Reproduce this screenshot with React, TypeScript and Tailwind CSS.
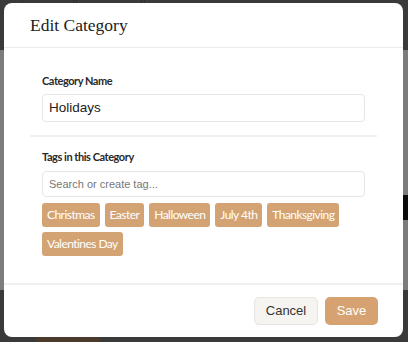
import React from "react";

const tags = ["Christmas", "Easter", "Halloween", "July 4th", "Thanksgiving", "Valentines Day"];

export default function App() {
  return (
    <div className="relative w-[408px] h-[342px] overflow-hidden bg-[#3a3a3a]">
      {/* dimmed page behind the dialog */}
      <div className="flex h-full">
        <div className="w-[4px] flex flex-col">
          <div className="h-[50px]" />
          <div className="h-[240px] bg-[#7c7c7c]" />
        </div>
        <div className="flex-1 flex flex-col">
          <div className="flex h-[3px] gap-[2px] px-[18px]">
            <div className="w-[52px] border-x border-[#2e2e2e]" />
            <div className="w-[66px] border-x border-[#2e2e2e]" />
            <div className="flex-1 border-l border-[#2e2e2e]" />
          </div>
          <div className="flex-1" />
          <div className="h-[5px] flex pl-[32px]">
            <div className="w-[64px] bg-[#4a3b2c]" />
          </div>
        </div>
        <div className="w-[5px] flex flex-col">
          <div className="h-[50px]" />
          <div className="h-[145px] bg-[#7c7c7c]" />
          <div className="h-[25px] bg-[#0c0c0c]" />
          <div className="h-[70px] bg-[#7c7c7c]" />
        </div>
      </div>

      <div className="absolute left-[4px] top-[3px] w-[399px] h-[334px] rounded-[8px] bg-white flex flex-col">
        <div className="h-[45px] flex items-center px-[26px] border-b border-[#ebebeb]">
          <h2 className="font-['Liberation_Serif',serif] text-[17.5px] text-[#222] leading-none pt-[2px]">
            Edit Category
          </h2>
        </div>

        <div className="px-[26px] pt-[25px]">
          <div className="px-[12px] pb-[13px] border-b-2 border-[#f0f0f0]">
            <label className="font-['Lato',sans-serif] block text-[11px] font-bold text-[#2a2a2a] leading-[16px] tracking-[-0.45px]">
              Category Name
            </label>
            <div className="mt-[5px] h-[28px] rounded-[4px] border border-[#e6e6e6] flex items-center px-[6px]">
              <span className="font-['Liberation_Sans',Arial,sans-serif] text-[13.5px] text-[#222]">Holidays</span>
            </div>
          </div>

          <div className="px-[12px] pt-[12px]">
            <label className="font-['Lato',sans-serif] block text-[11px] font-bold text-[#2a2a2a] leading-[16px] tracking-[-0.45px]">
              Tags in this Category
            </label>
            <div className="mt-[6px] h-[26px] rounded-[4px] border border-[#e6e6e6] flex items-center px-[6px]">
              <span className="font-['Liberation_Sans',Arial,sans-serif] text-[11px] text-[#777]">
                Search or create tag...
              </span>
            </div>
            <div className="mt-[6px] flex flex-wrap gap-[5px]">
              {tags.map((t) => (
                <span
                  key={t}
                  className="font-['Lato',sans-serif] h-[24px] px-[5px] rounded-[3px] bg-[#d4a373] text-white text-[12px] tracking-[-0.55px] flex items-center"
                >
                  {t}
                </span>
              ))}
            </div>
          </div>
        </div>

        <div className="mt-auto h-[54px] border-t-2 border-[#f0f0f0] flex items-center justify-end gap-[7px] px-[25px]">
          <button className="h-[28px] w-[64px] rounded-[5px] border border-[#e8e4df] bg-[#f6f4f1] text-[#333] font-['Liberation_Sans',Arial,sans-serif] text-[13px]">
            Cancel
          </button>
          <button className="h-[28px] w-[53px] rounded-[5px] bg-[#d6a271] text-white font-['Liberation_Sans',Arial,sans-serif] text-[13px]">
            Save
          </button>
        </div>
      </div>
    </div>
  );
}
